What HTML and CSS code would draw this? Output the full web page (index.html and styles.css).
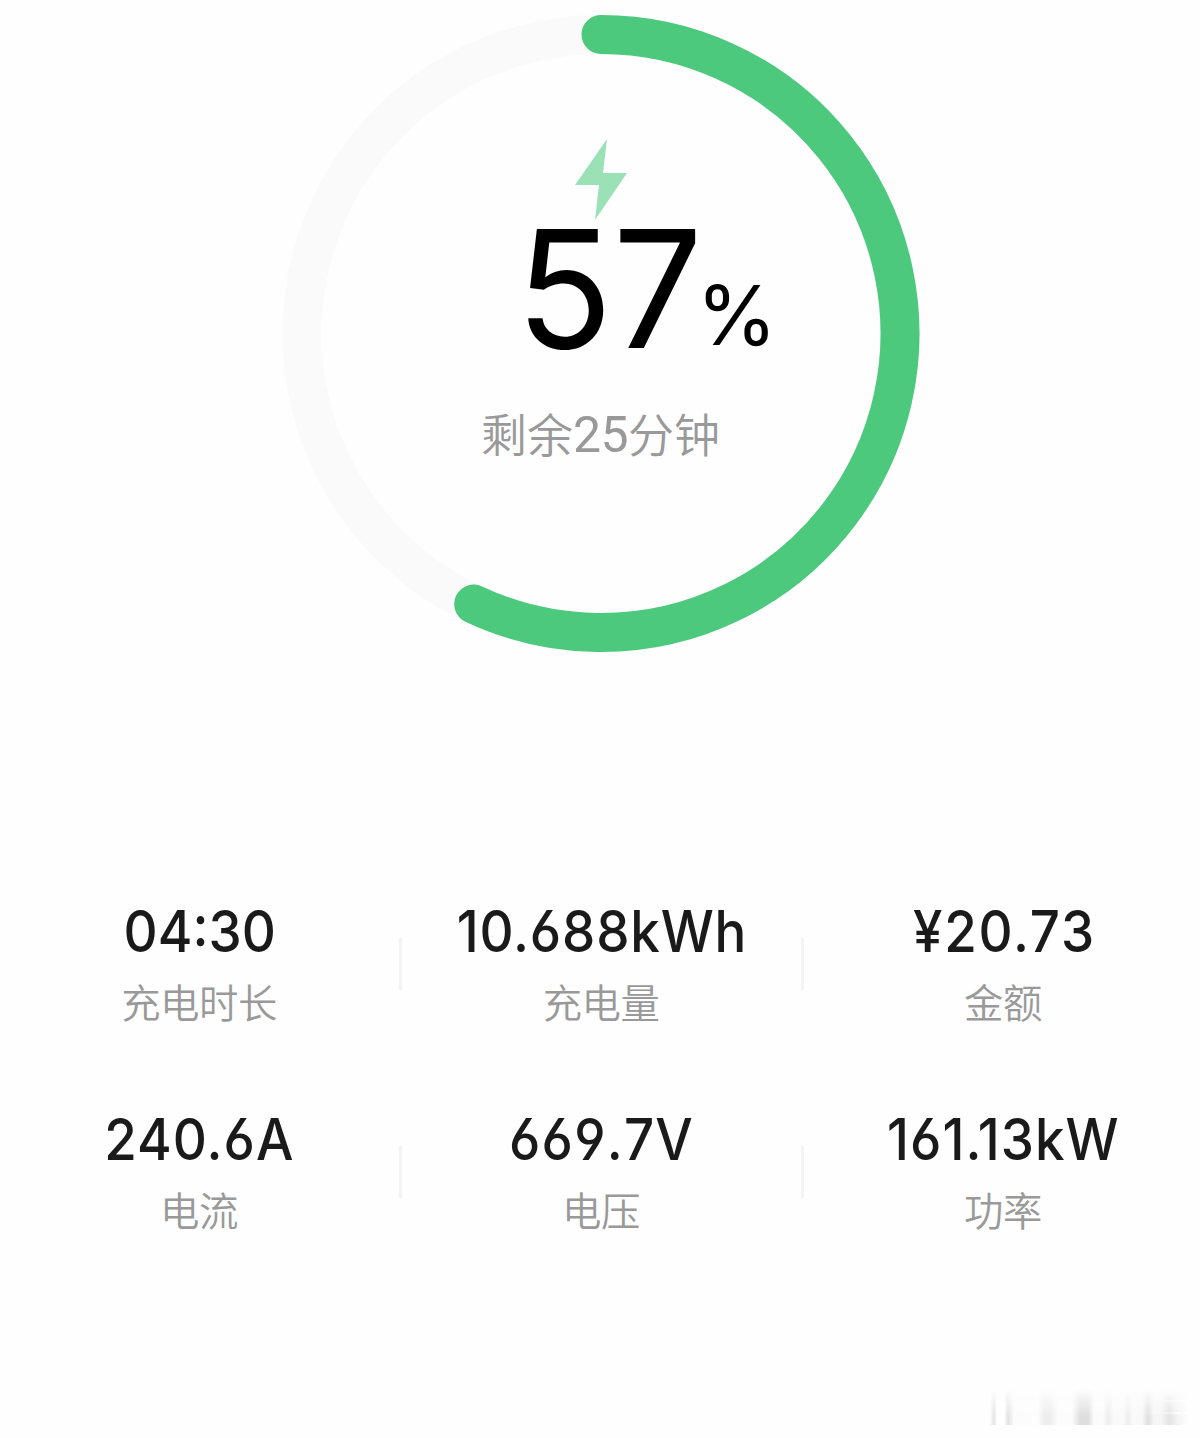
FILE: index.html
```html
<!DOCTYPE html>
<html lang="zh-CN">
<head>
<meta charset="utf-8">
<title>充电</title>
<link rel="stylesheet" href="styles.css">
</head>
<body>
<main class="page">
  <section class="gauge">
    <svg class="ring" viewBox="0 0.5 638 638" aria-hidden="true">
      <circle class="track" cx="319" cy="319" r="299"/>
      <path class="progress" d="M319 20 A299 299 0 1 1 191.7 589.55"/>
    </svg>
    <div class="reading">
      <svg class="bolt" viewBox="0 0 52 82" aria-hidden="true"><path d="M32 0 L28 34 H52 L20 81 L24 46 H0 Z"/></svg>
      <div class="percent"><span class="number">57</span><span class="sign">%</span></div>
      <div class="remaining">剩余<span class="minutes">25</span>分钟</div>
    </div>
  </section>
  <section class="stats">
    <div class="stat"><div class="value duration">04:30</div><div class="label">充电时长</div></div>
    <i class="divider"></i>
    <div class="stat"><div class="value energy">10.688kWh</div><div class="label">充电量</div></div>
    <i class="divider"></i>
    <div class="stat"><div class="value amount">¥20.73</div><div class="label">金额</div></div>
    <div class="stat"><div class="value current">240.6A</div><div class="label">电流</div></div>
    <i class="divider"></i>
    <div class="stat"><div class="value voltage">669.7V</div><div class="label">电压</div></div>
    <i class="divider"></i>
    <div class="stat"><div class="value power">161.13kW</div><div class="label">功率</div></div>
  </section>
  <div class="smear"></div>
</main>
</body>
</html>
```
FILE: styles.css
```css
* { box-sizing: border-box; }
body { margin: 0; background: #fefefe; }
.page {
  width: 1200px; height: 1438px; overflow: hidden;
  display: flex; flex-direction: column;
  font-family: Roboto, "Noto Sans CJK SC", sans-serif;
}
.gauge { display: grid; justify-content: center; padding: 15px 0 0 1px; height: 896px; align-content: start; }
.ring { grid-area: 1 / 1; width: 638px; height: 638px; }
.track { fill: none; stroke: #fafafa; stroke-width: 39; }
.progress { fill: none; stroke: #4dc97d; stroke-width: 39; stroke-linecap: round; }
.reading { grid-area: 1 / 1; display: flex; flex-direction: column; align-items: center; padding-top: 124px; }
.bolt { width: 52px; height: 82px; fill: #9ae1b6; }
.percent { display: flex; align-items: flex-start; align-self: flex-start; height: 180px; margin: -22px 0 0 234px; color: #000; }
.number { width: 181px; font: 400 164px/180px Inter, sans-serif; font-kerning: none; transform: scaleX(.97); transform-origin: left; }
.sign { font: 400 82px/180px Inter, sans-serif; padding-top: 27px; height: 180px; }
.remaining { margin-top: 22px; font-size: 46px; line-height: 68px; color: #999; font-weight: 350; }
.minutes { font-size: 50px; font-weight: 400; letter-spacing: -0.5px; }
.stats { display: grid; grid-template-columns: 399px 3px 399px 3px 399px; grid-auto-rows: 208px; height: 493px; }
.stat { display: flex; flex-direction: column; align-items: center; }
.value {
  font: 480 57.5px/70px Inter, sans-serif; font-feature-settings: "cv03", "cv04";
  color: #1a1a1a; white-space: nowrap; transform: scaleX(.92);
}
.energy { letter-spacing: .9px; }
.amount { letter-spacing: 1.9px; margin-left: 2px; }
.current { letter-spacing: 1.1px; }
.voltage { letter-spacing: 1.3px; font-kerning: none; }
.power { letter-spacing: 1.1px; }
.label { font: 350 39.4px/58px "Noto Sans CJK SC", sans-serif; letter-spacing: -.5px; color: #999; margin: 6px 1px 0 0; }
.divider { width: 3px; height: 52px; margin-top: 42px; background: #f4f4f4; }
.smear {
  align-self: flex-end; width: 198px; height: 36px; margin-right: 12px;
  background:
    linear-gradient(90deg, transparent 150px, #fff9 190px) 0 11px / 100% 2px no-repeat,
    linear-gradient(90deg, transparent 150px, #fff9 190px) 0 23px / 100% 2px no-repeat,
    linear-gradient(90deg, transparent 0, #e4e4e4 4px, #fff 7px, #fff 14px, #e2e2e2 18px, #fbfbfb 24px, #fdfdfd 48px, #ededed 54px, #ededed 60px, #fcfcfc 68px, #fcfcfc 82px, #dedede 90px, #dedede 98px, #fbfbfb 104px, #fbfbfb 113px, #ededed 118px, #fafafa 124px, #fafafa 133px, #eeeeee 138px, #fafafa 143px, #f8f8f8 152px, #dfdfdf 158px, #f6f6f6 164px, #f6f6f6 171px, #e3e3e3 179px, #f3f3f3 187px, transparent 198px);
  -webkit-mask-image: linear-gradient(transparent, #000 75%);
  mask-image: linear-gradient(transparent, #000 75%);
}
```
